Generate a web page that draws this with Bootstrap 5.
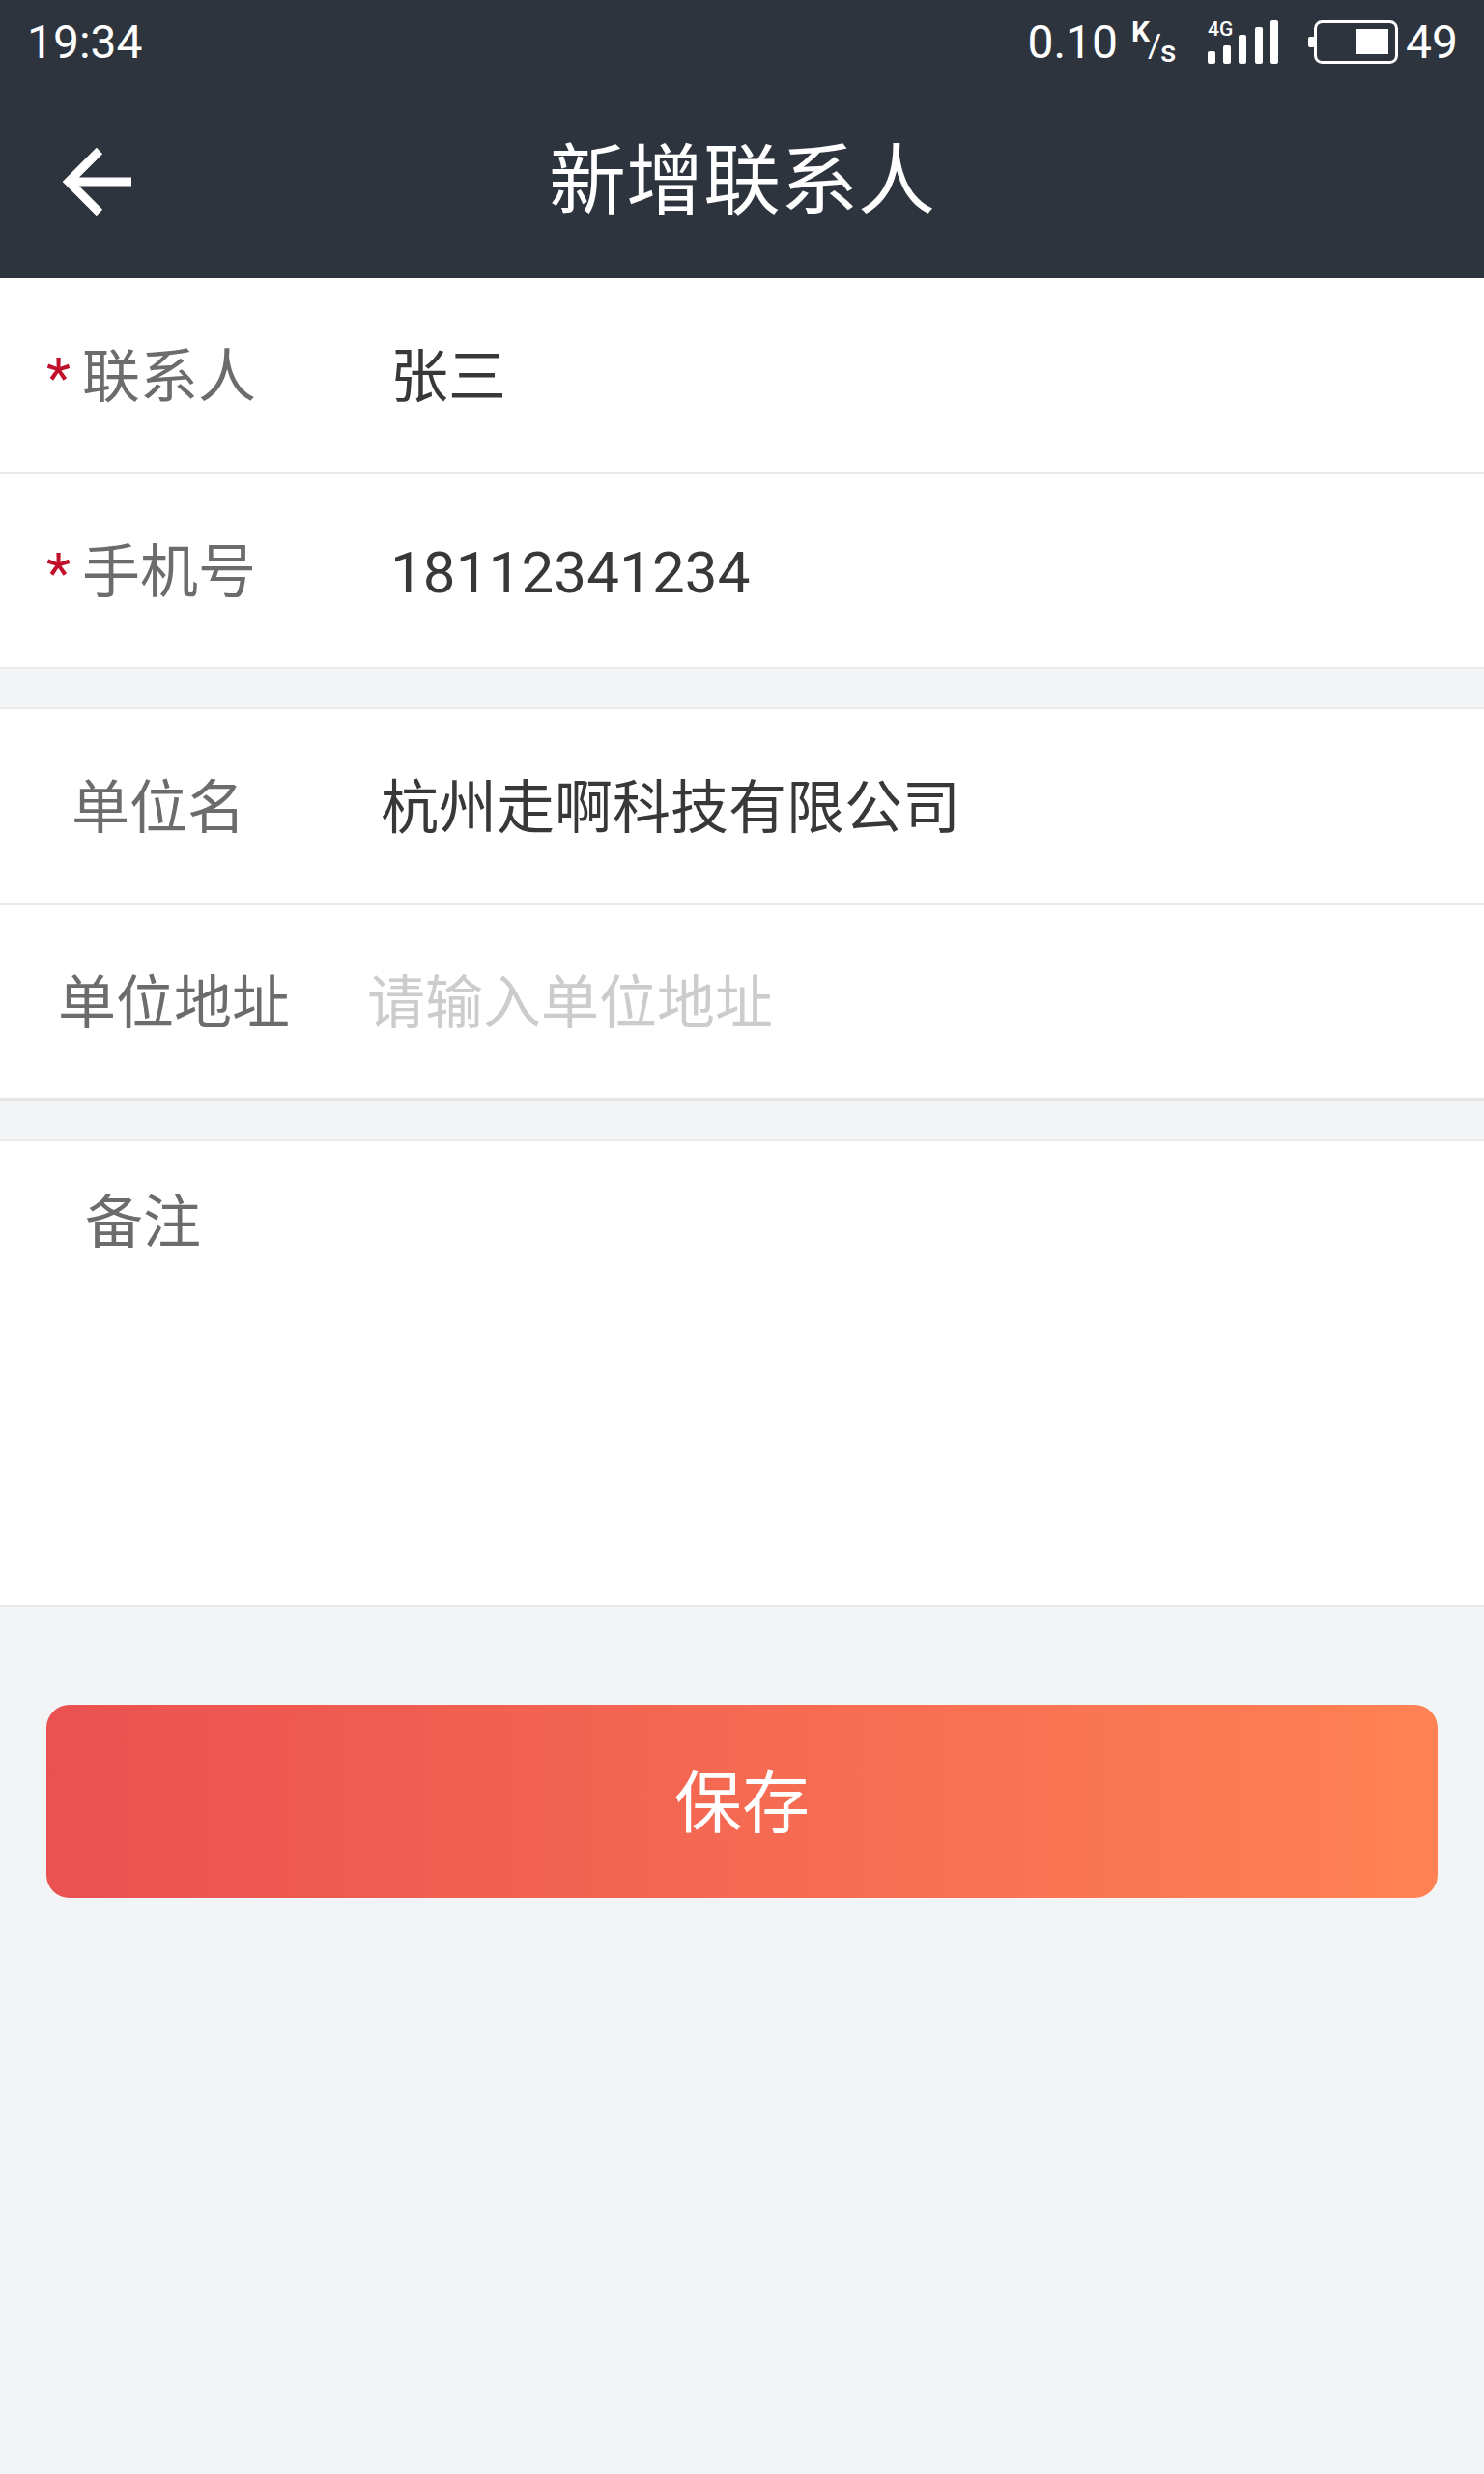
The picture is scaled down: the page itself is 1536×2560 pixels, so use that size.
<!DOCTYPE html>
<html lang="zh-CN">
<head>
  <meta charset="UTF-8" />
  <meta name="viewport" content="width=device-width, initial-scale=1.0" />
  <title>新增联系人</title>
  <link href="https://cdn.jsdelivr.net/npm/bootstrap@5.3.0/dist/css/bootstrap.min.css" rel="stylesheet" />
  <script src="https://cdn.jsdelivr.net/npm/bootstrap@5.3.0/dist/js/bootstrap.bundle.min.js"></script>
  <style>
    body {
      background-color: #f3f4f6;
      font-family: Roboto, "Noto Sans CJK SC", sans-serif;
      min-height: 2560px;
    }
    /* Header */
    .top-bar {
      background-color: #2e343d;
      color: #fff;
      height: 288px;
    }
    .status-row {
      height: 88px;
      padding: 0 27px 0 28px;
      font-size: 48px;
      line-height: 1;
    }
    .speed-icon {
      margin: 0 19px 0 14px;
    }
    .signal-icon {
      margin-right: 30px;
    }
    .battery-num {
      margin-left: 7px;
    }
    .title-row {
      height: 200px;
    }
    .back-arrow {
      position: absolute;
      left: 62px;
      top: 50%;
      transform: translateY(-50%);
    }
    .page-title {
      font-size: 80px;
      line-height: 1;
    }
    /* Form rows */
    .form-group-box {
      background: #fff;
      border-top: 2px solid #e8e9eb;
      border-bottom: 2px solid #e8e9eb;
    }
    .form-group-box.first-box {
      border-top: 0;
    }
    .form-group-box.thick-bottom {
      border-bottom: 3px solid #e4e5e7;
    }
    .field-row {
      height: 200px;
      padding-top: 6px;
      font-size: 60px;
      line-height: 1;
    }
    .field-row + .field-row {
      border-top: 2px solid #e8e9eb;
      height: 202px;
    }
    .field-label {
      color: #6c6c6c;
      flex: 0 0 auto;
    }
    .field-value {
      color: #383838;
    }
    .phone-value {
      letter-spacing: 0.15px;
    }
    .field-hint {
      color: #ccc;
    }
    .star {
      color: #c0102a;
      font-size: 58px;
      width: 38px;
      display: inline-block;
      text-align: right;
      margin-right: 12px;
    }
    .w-required { padding-left: 35px; width: 404px; }
    .w-required-num { padding-left: 35px; width: 404px; }
    .w-company { padding-left: 74px; width: 394px; }
    .w-address { padding-left: 60px; width: 380px; }
    .group-gap {
      height: 40px;
    }
    .notes-box {
      height: 484px;
      padding: 55px 0 0 88px;
      font-size: 60px;
      line-height: 1;
    }
    /* Save button */
    .save-wrap {
      padding: 101px 48px 0;
    }
    .save-btn {
      height: 200px;
      padding-top: 12px;
      border: 0;
      border-radius: 24px;
      color: #fff;
      font-size: 70px;
      background: linear-gradient(90deg, #ea5151, #ff8254);
    }
  </style>
</head>
<body>
  <!-- Header with status bar -->
  <div class="top-bar">
    <div class="status-row d-flex align-items-center justify-content-between">
      <span>19:34</span>
      <div class="d-flex align-items-center">
        <span>0.10</span>
        <svg width="60" height="80" viewBox="0 0 60 80" class="speed-icon">
          <text x="0" y="39" font-family="Roboto" font-size="30" font-weight="700" fill="#fff">K</text>
          <text x="17" y="55" font-family="Roboto" font-size="34" fill="#fff">/</text>
          <text x="30" y="60" font-family="Roboto" font-size="32" font-weight="500" fill="#fff">s</text>
        </svg>
        <svg width="74" height="80" viewBox="0 0 74 80" class="signal-icon">
          <text x="0" y="33" font-family="Roboto" font-size="21" font-weight="500" fill="#fff">4G</text>
          <rect x="0" y="49" width="8" height="13" rx="2" fill="#fff" />
          <rect x="16" y="43" width="8" height="19" rx="2" fill="#fff" />
          <rect x="32" y="32" width="8" height="30" rx="2" fill="#fff" />
          <rect x="49" y="24" width="8" height="38" rx="2" fill="#fff" />
          <rect x="65" y="17" width="8" height="45" rx="2" fill="#fff" />
        </svg>
        <svg width="94" height="46" viewBox="0 0 94 46">
          <rect x="7.5" y="1.5" width="84" height="42" rx="7" fill="none" stroke="#fff" stroke-width="3" />
          <rect x="0" y="17" width="7" height="11" rx="2" fill="#fff" />
          <rect x="50" y="9" width="33" height="26" fill="#fff" />
        </svg>
        <span class="battery-num">49</span>
      </div>
    </div>
    <div class="title-row position-relative d-flex align-items-center justify-content-center">
      <svg class="back-arrow" width="76" height="76" viewBox="0 0 76 76">
        <path d="M74 38H10M41 6L9 38l32 32" fill="none" stroke="#fff" stroke-width="9" />
      </svg>
      <span class="page-title">新增联系人</span>
    </div>
  </div>

  <!-- Required fields -->
  <div class="form-group-box first-box">
    <div class="field-row d-flex align-items-center">
      <div class="field-label w-required"><span class="star">*</span>联系人</div>
      <div class="field-value">张三</div>
    </div>
    <div class="field-row d-flex align-items-center">
      <div class="field-label w-required-num"><span class="star">*</span>手机号</div>
      <div class="field-value phone-value">18112341234</div>
    </div>
  </div>
  <div class="group-gap"></div>

  <!-- Company fields -->
  <div class="form-group-box thick-bottom">
    <div class="field-row d-flex align-items-center">
      <div class="field-label w-company">单位名</div>
      <div class="field-value">杭州走啊科技有限公司</div>
    </div>
    <div class="field-row d-flex align-items-center">
      <div class="field-label w-address">单位地址</div>
      <div class="field-hint">请输入单位地址</div>
    </div>
  </div>
  <div class="group-gap"></div>

  <!-- Notes -->
  <div class="form-group-box notes-box">
    <div class="field-label">备注</div>
  </div>

  <div class="save-wrap">
    <button type="button" class="btn save-btn w-100">保存</button>
  </div>
</body>
</html>
